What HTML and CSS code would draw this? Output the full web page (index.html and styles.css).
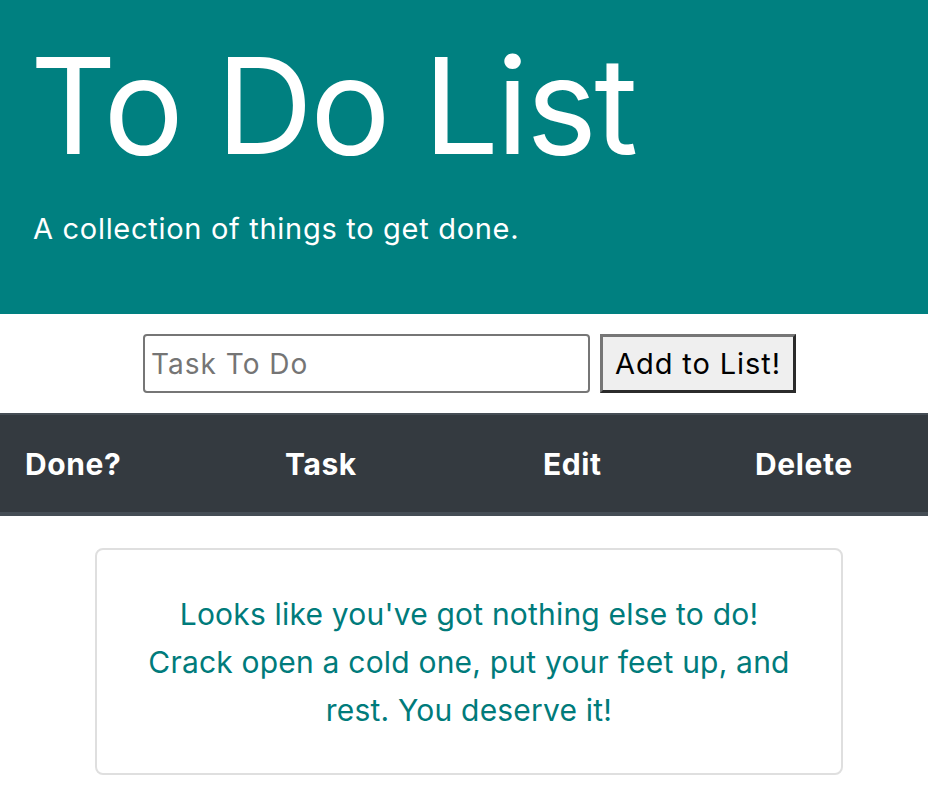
FILE: index.html
```
<!DOCTYPE html>
<html lang="en">
<head>
<meta charset="utf-8">
<title>To Do List</title>
<link rel="stylesheet" href="styles.css">
</head>
<body>
<header class="jumbo">
  <h1 class="title">To Do List</h1>
  <p class="lead">A collection of things to get done.</p>
</header>
<form class="add-form">
  <input class="task-input" type="text" placeholder="Task To Do">
  <button class="add-btn" type="button">Add to List!</button>
</form>
<div class="table-head">
  <div class="th">Done?</div>
  <div class="th">Task</div>
  <div class="th">Edit</div>
  <div class="th">Delete</div>
</div>
<div class="empty-wrap">
  <div class="empty-card">
    <p class="empty-text">Looks like you've got nothing else to do!<br>Crack open a cold one, put your feet up, and<br>rest. You deserve it!</p>
  </div>
</div>
</body>
</html>
```
FILE: styles.css
```
html, body {
  margin: 0;
  padding: 0;
  background: #fff;
  font-family: Inter, "Noto Sans", sans-serif;
}

.jumbo {
  background: #008080;
  color: #fff;
  height: 314px;
  box-sizing: border-box;
  padding: 25px 33px 0;
}

.title {
  margin: 0 0 0 -3px;
  font-size: 134px;
  font-weight: 400;
  line-height: 1.2;
  letter-spacing: -2.6px;
}

.lead {
  margin: 26px 0 0;
  font-size: 29px;
  font-weight: 400;
  line-height: 1.2;
  letter-spacing: 0.7px;
}

.add-form {
  display: flex;
  justify-content: center;
  gap: 10px;
  padding: 20px 0 20px 11px;
  margin: 0;
}

.task-input {
  width: 447px;
  height: 59px;
  box-sizing: border-box;
  border: 2px solid #767676;
  border-radius: 4px;
  padding: 0 6px;
  font-family: Inter, "Noto Sans", sans-serif;
  font-size: 28px;
  letter-spacing: 1px;
  color: #222;
  background: #fff;
}

.task-input::placeholder {
  color: #757575;
}

.add-btn {
  width: 196px;
  height: 59px;
  box-sizing: border-box;
  background: #efefef;
  border-style: solid;
  border-width: 3px;
  border-color: #767676 #2b2b2b #2b2b2b #767676;
  font-family: Inter, "Noto Sans", sans-serif;
  font-size: 29px;
  letter-spacing: 0.9px;
  color: #000;
  padding: 0;
}

.table-head {
  display: grid;
  grid-template-columns: 260px 258px 212px 1fr;
  background: #343a40;
  border-top: 2px solid #454d55;
  border-bottom: 4px solid #454d55;
  height: 103px;
  box-sizing: border-box;
  align-items: center;
}

.th {
  color: #fff;
  font-weight: 700;
  font-size: 30px;
  letter-spacing: 0.6px;
  padding-left: 25px;
}

.empty-wrap {
  display: flex;
  justify-content: center;
  padding: 32px 0 0 10px;
}

.empty-card {
  width: 748px;
  height: 227px;
  box-sizing: border-box;
  border: 2px solid #dfdfdf;
  border-radius: 8px;
  display: flex;
  align-items: center;
  justify-content: center;
}

.empty-text {
  margin: 0;
  text-align: center;
  color: #007b7b;
  font-size: 30px;
  line-height: 48px;
  letter-spacing: 0.2px;
}
```
